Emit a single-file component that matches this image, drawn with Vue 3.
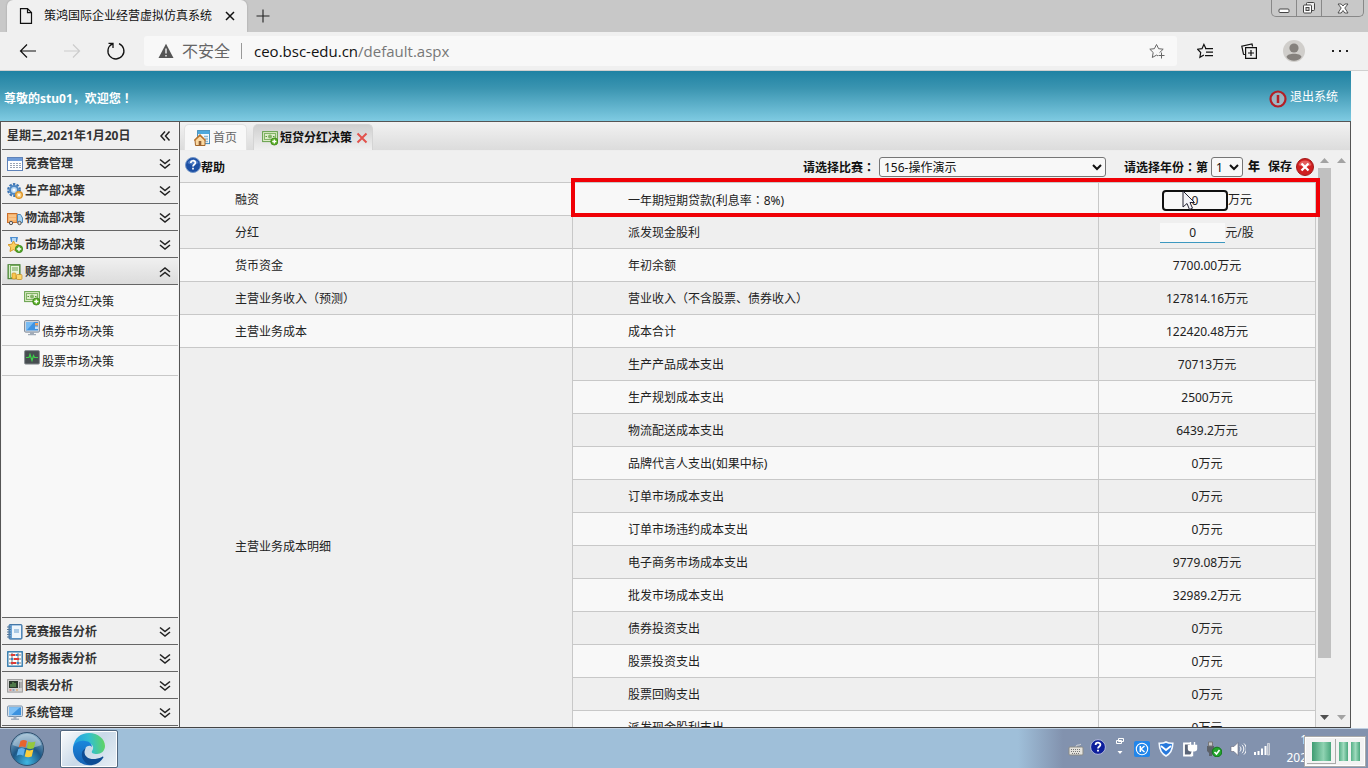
<script setup>
import { ref } from 'vue'

const icons = {
  table: '<rect x=".5" y="1.5" width="15" height="13" fill="#fff" stroke="#5f82b8"/><rect x="1" y="2" width="14" height="3" fill="#6f9bd8"/><path d="M3 7.5h2M6 7.5h2M9 7.5h2M12 7.5h2M3 9.500h2M6 9.500h2M9 9.500h2M12 9.500h2M3 11.500h2M6 11.500h2M9 11.500h2M12 11.500h2" stroke="#9aa4b4"/>',
  gear: '<circle cx="7" cy="7" r="5.800" fill="none" stroke="#3f76b4" stroke-width="2.200" stroke-dasharray="2.400 1.250"/><circle cx="7" cy="7" r="4" fill="#b9d8f2" stroke="#4f88c4" stroke-width="2"/><circle cx="7" cy="7" r="1.500" fill="#fff"/><circle cx="12" cy="12" r="3.300" fill="#fbd38a" stroke="#df982c" stroke-width="1.500"/><circle cx="12" cy="12" r="1.100" fill="#fff"/>',
  truck: '<rect x=".5" y="3.500" width="9.500" height="9" fill="#f6b26a" stroke="#c96f2c"/><path d="M2 6h7M2 9h7" stroke="#fbd5a5"/><path d="M10.500 4.500h3l2 3.500v4.500h-5z" fill="#a9d3f2" stroke="#4e88b8"/><circle cx="4" cy="13" r="1.700" fill="#ddd" stroke="#555"/><circle cx="12.500" cy="13" r="1.700" fill="#ddd" stroke="#555"/>',
  medal: '<path d="M3 0h8l-1 5H4z" fill="#4d8ed0"/><path d="M5 1h4v4H5z" fill="#b4d8f5"/><path d="M6.500 4l1.600 3.200 3.700.5-2.700 2.500.7 4.200-3.300-1.800L3 14.500l.7-4.300L1 7.700l3.800-.5z" fill="#fbcf62" stroke="#d59a2a"/><circle cx="12" cy="12" r="3.700" fill="#56a82a" stroke="#327d16" stroke-width=".7"/><path d="M12 9.800v4.400M9.800 12h4.400" stroke="#fff" stroke-width="1.400"/>',
  ledger: '<rect x="1" y=".7" width="12" height="14" fill="#81b967" stroke="#477e35"/><rect x="4" y="2" width="8" height="11" fill="#e8f4dc"/><path d="M5 4h6M5 6h6" stroke="#6fa052"/><path d="M2.500 1v13" stroke="#d8edcc"/><rect x="5" y="9" width="4" height="6" rx="1" fill="#f9c84e" stroke="#c58a22" stroke-width=".7"/><rect x="9.500" y="10.500" width="5.500" height="5" rx="1" fill="#fbd86e" stroke="#c58a22" stroke-width=".7"/>',
  money: '<rect x=".6" y="1.600" width="14.800" height="10" fill="#dcecc8" stroke="#65a04a"/><rect x="2.500" y="3.500" width="11" height="6" fill="none" stroke="#82b466"/><circle cx="8" cy="6.500" r="2" fill="#82b466"/><path d="M3.500 6.500h1.500M11 6.500h1.500" stroke="#5b943d"/><circle cx="12.300" cy="11.500" r="3.600" fill="#58ad22" stroke="#347c15" stroke-width=".7"/><path d="M12.300 9.400v4.200M10.200 11.500h4.200" stroke="#fff" stroke-width="1.400"/>',
  screen: '<rect x=".6" y=".6" width="14.800" height="11.500" rx="1" fill="#d8dde4" stroke="#7a8594"/><rect x="2" y="2" width="12" height="8.500" fill="#3e93e2"/><path d="M2 2h8L3 10H2z" fill="#78bbf3"/><rect x="11" y="3" width="3" height="2.500" fill="#f0a25b"/><rect x="11" y="6.500" width="3" height="2.500" fill="#c8dff5"/><path d="M6 12h4v2h2v1.300H4V14h2z" fill="#a1abb8"/>',
  pulse: '<rect x=".6" y=".6" width="14.800" height="13.500" rx="1" fill="#474d50" stroke="#8b9094"/><path d="M2 7.500h3l1-3 2 6 1.500-5 1 2H14" fill="none" stroke="#3fd24b" stroke-width="1.200"/>',
  notebook: '<rect x="2" y=".6" width="13" height="14.500" rx="1" fill="#6ba3d6" stroke="#3b6f9f"/><rect x="5" y="1.500" width="9" height="12.500" fill="#eef5fb"/><path d="M0 3h4M0 5.500h4M0 8h4M0 10.500h4M0 13h4" stroke="#55789a"/><path d="M7 5h5v4H7z" fill="#a8c8e4"/>',
  abacus: '<rect x=".8" y=".8" width="14.400" height="14.400" fill="#fff" stroke="#2d78ac" stroke-width="1.400"/><path d="M2 4h12M2 8h12M2 12h12M5 2v12M11 2v12" stroke="#777"/><path d="M4 3h4v2H4zM7 7h5v2H7zM4 11h5v2H4z" fill="#dd3b36"/><path d="M9 3h2v2H9zM4 7h2v2H4zM10 11h2v2h-2z" fill="#3c7fc4"/>',
  chart: '<rect x=".6" y="1.600" width="14.800" height="12.500" fill="#d5d5d5" stroke="#999"/><rect x="2" y="3" width="9" height="7" fill="#2c3a2e"/><path d="M4 9V6M6 9V4M8 9V5" stroke="#75b966"/><path d="M12.500 4v6M14 4v6" stroke="#888"/><path d="M2.500 12h2" stroke="#d44"/><path d="M5.500 12h2" stroke="#47a"/><path d="M9 12h2" stroke="#d94"/>',
  monitor: '<rect x=".6" y="1" width="14.800" height="10.500" rx="1" fill="#e2e8ef" stroke="#7890a8"/><rect x="2" y="2.300" width="12" height="8" fill="#3b92df"/><path d="M2 2.300h11l-9 8H2z" fill="#7fc0f5"/><path d="M6.500 11.500h3v2h2.500V15H4v-1.500h2.500z" fill="#a3b0bf"/>',
  home: '<rect x="3.600" y=".6" width="12" height="13" fill="#f3faff" stroke="#3c88b8"/><rect x="4" y="1" width="11.500" height="3" fill="#4ea8dc"/><path d="M10 6.500h4M11 9h3M11 11.500h3" stroke="#8db8d4" stroke-width="1.500"/><path d="M1 10l5-4.500 5 4.500v5.500H1.500z" fill="#fbd9a2" stroke="#a3662b"/><path d="M.3 10.500L6 5l5.500 5.500" fill="none" stroke="#b8722b" stroke-width="1.500"/><path d="M4.700 15v-4h2.600v4z" fill="#946136"/>',
  down: '<path d="M3 3.500l5 4 5-4M3 8l5 4 5-4" fill="none" stroke="#222" stroke-width="1.600"/>',
  up: '<path d="M3 8l5-4 5 4M3 12.500l5-4 5 4" fill="none" stroke="#222" stroke-width="1.600"/>',
  left: '<path d="M8 3.500L4 8l4 4.500M12.500 3.500l-4 4.500 4 4.500" fill="none" stroke="#222" stroke-width="1.500"/>'
}

const topMenu = [
  ['table', '竞赛管理'],
  ['gear', '生产部决策'],
  ['truck', '物流部决策'],
  ['medal', '市场部决策']
]
const subMenu = [
  ['money', '短贷分红决策'],
  ['screen', '债券市场决策'],
  ['pulse', '股票市场决策']
]
const bottomMenu = [
  ['notebook', '竞赛报告分析'],
  ['abacus', '财务报表分析'],
  ['chart', '图表分析'],
  ['monitor', '系统管理']
]
const summary = [
  ['货币资金', '年初余额', '7700.00万元'],
  ['主营业务收入（预测）', '营业收入（不含股票、债券收入）', '127814.16万元'],
  ['主营业务成本', '成本合计', '122420.48万元']
]
const details = [
  ['生产产品成本支出', '70713万元'],
  ['生产规划成本支出', '2500万元'],
  ['物流配送成本支出', '6439.2万元'],
  ['品牌代言人支出(如果中标)', '0万元'],
  ['订单市场成本支出', '0万元'],
  ['订单市场违约成本支出', '0万元'],
  ['电子商务市场成本支出', '9779.08万元'],
  ['批发市场成本支出', '32989.2万元'],
  ['债券投资支出', '0万元'],
  ['股票投资支出', '0万元'],
  ['股票回购支出', '0万元'],
  ['派发现金股利支出', '0万元']
]
const loan = ref('0')
const dividend = ref('0')
</script>

<template>
  <div class="desktop">
    <div class="tabstrip">
      <div class="browser-tab">
        <svg class="i16" viewBox="0 0 16 16"><path d="M2.500.6h7l4 4v10.800h-11zM9.500.6v4h4" fill="none" stroke="#111" stroke-width="1.200" /></svg>
        <span class="tab-title">策鸿国际企业经营虚拟仿真系统</span>
        <button class="bare" aria-label="关闭标签页"><svg class="i16" viewBox="0 0 16 16"><path d="M4 4l8 8M12 4l-8 8" stroke="#111" stroke-width="1.500" /></svg></button>
      </div>
      <button class="bare new-tab" aria-label="新建标签页"><svg class="i16" viewBox="0 0 16 16"><path d="M8 1.500v13M1.500 8h13" stroke="#222" stroke-width="1.100" /></svg></button>
      <div class="win-controls">
        <button class="bare" aria-label="最小化"><svg width="16" height="14" viewBox="0 0 16 14"><rect x="3" y="8" width="10" height="3.500" rx="1" fill="#fff" stroke="#444" /></svg></button>
        <button class="bare" aria-label="还原"><svg width="16" height="14" viewBox="0 0 16 14"><rect x="5.500" y="1.500" width="8" height="8" rx="1" fill="#eee" stroke="#444" /><rect x="2.500" y="4" width="8" height="8" rx="1" fill="#fff" stroke="#444" /><rect x="5" y="6.500" width="3" height="3" fill="#ccc" stroke="#444" /></svg></button>
        <button class="bare" aria-label="关闭"><svg width="16" height="14" viewBox="0 0 16 14"><path d="M3 3h3.200L8 5l1.800-2H13l-3.200 4L13 12H9.800L8 9.500 6.200 12H3l3.200-5z" fill="#fff" stroke="#444" stroke-width=".9" /></svg></button>
      </div>
    </div>

    <div class="navbar">
      <button class="bare" aria-label="后退"><svg class="i20" viewBox="0 0 20 20"><path d="M18 10H2.500M9 3.500L2.500 10 9 16.500" fill="none" stroke="#111" stroke-width="1.200" /></svg></button>
      <button class="bare" aria-label="前进"><svg class="i20" viewBox="0 0 20 20"><path d="M2 10h15.500M11 3.500l6.500 6.500-6.500 6.500" fill="none" stroke="#ccc" stroke-width="1.200" /></svg></button>
      <button class="bare" aria-label="刷新"><svg class="i20" viewBox="0 0 20 20"><path d="M13 2.600a8 8 0 1 1-6.600.2M7 7V2.300H2.500" fill="none" stroke="#111" stroke-width="1.300" /></svg></button>
      <div class="address">
        <svg class="i16" viewBox="0 0 16 16"><path d="M8 .8L15.500 15H.5z" fill="#555" /><path d="M8 5.500v5M8 12v1.600" stroke="#fff" stroke-width="1.300" /></svg>
        <span class="unsafe">不安全</span>
        <span class="sep"></span>
        <span class="url">ceo.bsc-edu.cn<i>/default.aspx</i></span>
        <button class="bare" aria-label="添加到收藏夹"><svg class="i16" viewBox="0 0 16 16"><path d="M10.500 9.700l3.700-3.500-4.600-.5L7.500 1.500 5.400 5.700l-4.600.5 3.400 3.300-.9 5 4.200-2.400 1.500.8M12.500 9.500v6M9.500 12.500h6" fill="none" stroke="#666" /></svg></button>
      </div>
      <div class="tools">
        <button class="bare" aria-label="收藏夹"><svg class="i16" viewBox="0 0 16 16"><path d="M9 5.700L6.900 1.500 5 5.700l-4.500.5 3.200 3.300-.8 4.800 4-2.400M8 5.700h8M9 9.200h7M8 12.700h8" fill="none" stroke="#111" stroke-width="1.200" /></svg></button>
        <button class="bare" aria-label="集锦"><svg class="i16" viewBox="0 0 16 16"><path d="M4 11.500l-1.500-.2L.8 3.200 11 1l.6 2.500" fill="none" stroke="#111" stroke-width="1.200" /><path d="M4.600 4.600h10.800v10.800H4.600zM10 7v6M7 10h6" fill="none" stroke="#111" stroke-width="1.200" /></svg></button>
        <button class="bare" aria-label="个人资料"><svg width="22" height="22" viewBox="0 0 22 22"><circle cx="11" cy="11" r="11" fill="#d0cecb" /><circle cx="11" cy="8" r="4.600" fill="#85817d" /><path d="M3.500 17c.5-4.500 14.500-4.500 15 0-3 5-12 5-15 0z" fill="#85817d" /></svg></button>
        <button class="bare" aria-label="设置及其他"><svg class="i16" viewBox="0 0 16 16"><path d="M0 7h2v2H0zM7 7h2v2H7zM14 7h2v2h-2z" fill="#222" /></svg></button>
      </div>
    </div>

    <div class="page">
      <div class="app">
        <header class="banner">
          <b>尊敬的stu01，欢迎您<span class="punct">！</span></b>
          <a href="#" class="logout">
            <svg width="18" height="18" viewBox="0 0 18 18"><circle cx="9" cy="9" r="7.500" fill="#e5c4c4" fill-opacity=".5" stroke="#b31f26" stroke-width="2.200" /><path d="M9 5v8" stroke="#b31f26" stroke-width="2.500" /></svg>
            <span>退出系统</span>
          </a>
        </header>
        <div class="body">
          <nav class="sidebar">
            <div class="menu-row date"><span>星期三,2021年1月20日</span><svg class="i16" viewBox="0 0 16 16" v-html="icons.left"></svg></div>
            <button v-for="m in topMenu" :key="m[1]" class="menu-row">
              <svg class="i16" viewBox="0 0 16 16" v-html="icons[m[0]]"></svg><span>{{ m[1] }}</span>
              <svg class="i16" viewBox="0 0 16 16" v-html="icons.down"></svg>
            </button>
            <button class="menu-row open">
              <svg class="i16" viewBox="0 0 16 16" v-html="icons.ledger"></svg><span>财务部决策</span>
              <svg class="i16" viewBox="0 0 16 16" v-html="icons.up"></svg>
            </button>
            <div class="sub-list">
              <a v-for="m in subMenu" :key="m[1]" href="#" class="sub-row">
                <svg class="i16" viewBox="0 0 16 16" v-html="icons[m[0]]"></svg><span>{{ m[1] }}</span>
              </a>
            </div>
            <button v-for="m in bottomMenu" :key="m[1]" class="menu-row">
              <svg class="i16" viewBox="0 0 16 16" v-html="icons[m[0]]"></svg><span>{{ m[1] }}</span>
              <svg class="i16" viewBox="0 0 16 16" v-html="icons.down"></svg>
            </button>
          </nav>

          <main class="main">
            <div class="tabs">
              <button class="tab"><svg class="i16" viewBox="0 0 16 16" v-html="icons.home"></svg><span>首页</span></button>
              <div class="tab active">
                <svg class="i16" viewBox="0 0 16 16" v-html="icons.money"></svg><b>短贷分红决策</b>
                <button class="bare" aria-label="关闭"><svg width="12" height="12" viewBox="0 0 12 12"><path d="M1.500 1.500l9 9M10.500 1.500l-9 9" stroke="#e2524c" stroke-width="2" /></svg></button>
              </div>
            </div>
            <div class="frame">
              <div class="content">
                <div class="toolbar">
                  <a href="#" class="help">
                    <svg class="i16" viewBox="0 0 16 16"><circle cx="8" cy="8" r="7.500" fill="#1c4fa3" stroke="#7397c9" /><path d="M2.500 6a6 6 0 0 1 11 0c-4 2-7 2-11 0z" fill="#6e9adb" opacity=".6" /><path d="M5.800 6c0-3 4.600-3 4.600-.2C10.400 7.500 8 7.500 8 9.500M8 10.800v1.800" fill="none" stroke="#fff" stroke-width="1.700" /></svg>
                    <b>帮助</b>
                  </a>
                  <div class="filters">
                    <label for="match">请选择比赛<span class="punct">：</span></label>
                    <select id="match" class="match"><option>156-操作演示</option></select>
                    <label for="year" class="year-label">请选择年份<span class="punct">：</span>第</label>
                    <select id="year" class="year"><option>1</option></select>
                    <b class="unit">年</b>
                    <button class="bare save">保存</button>
                    <button class="bare close" aria-label="关闭">
                      <svg width="18" height="18" viewBox="0 0 18 18"><circle cx="9" cy="9" r="8.500" fill="#cf1f20" stroke="#a31818" /><path d="M2.500 7a7 7 0 0 1 13 0c-4 2-9 2-13 0z" fill="#ee7b77" opacity=".7" /><path d="M5.500 5.500l7 7M12.500 5.500l-7 7" stroke="#fff" stroke-width="2.300" /></svg>
                    </button>
                  </div>
                </div>
                <table class="grid">
                  <colgroup><col class="c1"><col class="c2"><col class="c3"></colgroup>
                  <tbody>
                    <tr>
                      <td>融资</td>
                      <td><label for="loan">一年期短期贷款(利息率<span class="punct">：</span>8%)</label></td>
                      <td class="field-cell">
                        <span class="field"><input id="loan" v-model="loan" class="num focused">万元</span>
                        <svg class="pointer" width="13" height="22" viewBox="0 0 13 22"><path d="M1 1v16l4-3.500 2.500 6 3-1.300L8 12.500h4.500z" fill="#f4f4f8" stroke="#223" stroke-width="1" /></svg>
                      </td>
                    </tr>
                    <tr>
                      <td>分红</td>
                      <td><label for="dividend">派发现金股利</label></td>
                      <td class="field-cell"><span class="field"><input id="dividend" v-model="dividend" class="num">元/股</span></td>
                    </tr>
                    <tr v-for="r in summary" :key="r[0]"><td>{{ r[0] }}</td><td>{{ r[1] }}</td><td>{{ r[2] }}</td></tr>
                    <tr v-for="(r, i) in details" :key="r[0]">
                      <td v-if="i === 0" :rowspan="details.length">主营业务成本明细</td>
                      <td>{{ r[0] }}</td><td>{{ r[1] }}</td>
                    </tr>
                  </tbody>
                </table>
              </div>
              <div class="scroll inner">
                <svg width="9" height="5" viewBox="0 0 9 5"><path d="M0 5h9L4.500 0z" fill="#a3a3a3" /></svg>
                <div class="track"><div class="thumb"></div></div>
                <svg width="9" height="5" viewBox="0 0 9 5"><path d="M0 0h9L4.500 5z" fill="#505050" /></svg>
              </div>
              <div class="scroll">
                <svg width="9" height="5" viewBox="0 0 9 5"><path d="M0 5h9L4.500 0z" fill="#a3a3a3" /></svg>
                <div class="track"></div>
                <svg width="9" height="5" viewBox="0 0 9 5"><path d="M0 0h9L4.500 5z" fill="#a3a3a3" /></svg>
              </div>
              <div class="highlight"></div>
            </div>
          </main>
        </div>
      </div>
    </div>

    <footer class="taskbar">
      <button class="bare start" aria-label="开始">
        <svg width="36" height="36" viewBox="0 0 36 36">
          <defs><radialGradient id="orb" cx=".5" cy=".9" r=".9"><stop offset="0" stop-color="#3fb7e2" /><stop offset=".5" stop-color="#1d5786" /><stop offset="1" stop-color="#8fb3cb" /></radialGradient></defs>
          <circle cx="18" cy="18" r="16.500" fill="url(#orb)" stroke="#31506f" />
          <path d="M3.500 14a15 15 0 0 1 29 0c-9 4-20 4-29 0z" fill="#dce9f2" opacity=".45" />
          <path d="M11.500 10c2.500-1.500 4.500-1 6.500 0l-1.600 6.500c-2.200-1.200-4.300-1.200-6.700 0z" fill="#e8642d" />
          <path d="M19.300 10.500c2.500 1.200 5 1 7.200 0l-1.700 6.700c-2.400 1-4.800 1-7 0z" fill="#94c83e" />
          <path d="M9.300 18c2.500-1.300 4.600-1.200 6.700 0l-1.700 6.800c-2.200-1.300-4.400-1.200-6.700 0z" fill="#5fb0ea" />
          <path d="M17.400 18.600c2.300 1.200 4.700 1 7 0l-1.700 6.800c-2.300 1-4.800 1-7 0z" fill="#fbce3b" />
        </svg>
      </button>
      <button class="bare edge" aria-label="Microsoft Edge">
        <svg width="34" height="34" viewBox="0 0 34 34">
          <defs>
            <linearGradient id="eg1" x1="0" y1=".3" x2="1" y2=".2"><stop offset="0" stop-color="#229be4" /><stop offset=".5" stop-color="#32bfd0" /><stop offset="1" stop-color="#63d65a" /></linearGradient>
            <linearGradient id="eg2" x1="0" y1="0" x2="0" y2="1"><stop offset="0" stop-color="#1b87dc" /><stop offset="1" stop-color="#1561b4" /></linearGradient>
          </defs>
          <path d="M1 16C2 6 9 1 17 1c9 0 16 6 16 13 0 5-4 8-8 8-4 0-6-1-5-3 3-4 0-8-5-8C8 11 2 15 1 21z" fill="url(#eg1)" />
          <path d="M1 16c1-5 6-8 12-7 4 0 7 3 7 6-3-3-8 0-8 6 0 5 4 10 9 12C9 35 0 26 1 16z" fill="url(#eg2)" />
          <path d="M14 16c-5 7 3 15 16 9 1-1 2 0 1 1-3 5-8 7-11 7-7 0-11-7-10-12 0-2 2-4 4-5z" fill="#0d4c94" />
        </svg>
      </button>
      <div class="tray">
        <svg class="i16" viewBox="0 0 16 16"><path d="M8 6c0-3 3-1 5-3" fill="none" stroke="#ddd" /><rect x="1" y="6" width="14" height="8" rx="1" fill="#e4e2dc" stroke="#8b8b86" /><path d="M3 8.500h10M3 10.500h10M4 12.500h8" stroke="#777" stroke-dasharray="1 1" /></svg>
        <svg class="i16" viewBox="0 0 16 16"><circle cx="8" cy="8" r="7.400" fill="#0d1f9c" stroke="#b4bad8" /><path d="M5.600 6c0-3 4.800-3 4.800-.2C10.400 7.500 8 7.500 8 9.500M8 10.800v1.800" fill="none" stroke="#fff" stroke-width="1.800" /></svg>
        <svg width="10" height="20" viewBox="0 0 10 20"><path d="M3.500 1.500h5v3h-5zM1.500 3.500h5v3h-5z" fill="#8494ad" stroke="#fff" /><path d="M2.500 14h5L5 17z" fill="#fff" /></svg>
        <svg class="i16" viewBox="0 0 16 16"><rect width="16" height="16" rx="2" fill="#2186ea" /><circle cx="8" cy="8" r="5.700" fill="none" stroke="#fff" stroke-width="1.100" /><path d="M6.300 5v6M10.500 5L7 8l3.500 3" fill="none" stroke="#fff" stroke-width="1.500" /></svg>
        <svg class="i16" viewBox="0 0 16 16"><path d="M8 1c2 1.200 4.200 1.400 6.800 1.300C14.600 8.500 12.800 12.600 8 15 3.200 12.600 1.400 8.500 1.200 2.300 3.800 2.400 6 2.200 8 1z" fill="#2678dc" stroke="#f2f8ff" stroke-width="1.600" /><path d="M3 5l5 4 5-4" fill="none" stroke="#fff" stroke-width="1.800" /></svg>
        <svg class="i16" viewBox="0 0 16 16"><path d="M8 2.500H2v12h8" fill="#5b6578" stroke="#fff" stroke-width="1.800" /><path d="M8.500 1v3M12.500 1v3M6.500 4.500h8V8c0 2.500-8 2.500-8 0zM10.500 9v5.500H8" fill="#fff" stroke="#fff" stroke-width="1.400" /></svg>
        <svg class="i16" viewBox="0 0 16 16"><path d="M1 5h7v5l-2 2v3H3v-3l-2-2z" fill="#5c6168" /><path d="M2.500 1h4v4h-4z" fill="#c8c8c8" stroke="#777" /><circle cx="11" cy="11" r="4.800" fill="#22a52c" stroke="#13781b" /><path d="M8.500 11l2 2 3-4" fill="none" stroke="#fff" stroke-width="1.600" /></svg>
        <svg class="i16" viewBox="0 0 16 16"><path d="M1 5.500h3L8 1.500v13l-4-4H1z" fill="#fff" stroke="#667" stroke-width=".6" /><path d="M10 5.500c1.300 1.500 1.300 3.500 0 5M12 3.800c2.400 2.400 2.400 6 0 8.400M14 2.500c3 3 3 8 0 11" fill="none" stroke="#fff" /></svg>
        <svg class="i16" viewBox="0 0 16 16"><path d="M0 14v-3h2v3zM3.500 14v-4h2v4zM7 14V7.500h2V14zM10.500 14V5h2v9z" fill="#fff" /><path d="M13.500 14V2.500h2V14z" fill="#adb5c6" stroke="#eee" stroke-width=".6" /></svg>
        <div class="clock"><span>1</span><span>202</span></div>
      </div>
      <div class="recorder">
        <button class="bare rec-stop" aria-label="停止"><span class="block"></span></button>
        <button class="bare rec-pause" aria-label="暂停"><span class="bar"></span><span class="bar"></span></button>
      </div>
    </footer>
  </div>
</template>

<style>
html, body { margin: 0; height: 100%; overflow: hidden; }
</style>

<style scoped>
.desktop { height: 100vh; display: flex; flex-direction: column; font: 12px/18px "Noto Sans", "Noto Sans CJK SC", sans-serif; color: #222; background: #f8f8f8; overflow: hidden; }
.desktop *, .desktop *::before { box-sizing: border-box; }
.i16 { width: 16px; height: 16px; flex: none; }
.i20 { width: 20px; height: 20px; flex: none; }
svg { display: block; flex: none; }
button, select, input { font: inherit; color: inherit; }
a { color: inherit; text-decoration: none; }
.bare { background: none; border: 0; padding: 0; display: flex; align-items: center; justify-content: center; }
.punct { font-family: "Noto Sans CJK TC", sans-serif; }

.tabstrip { height: 32px; flex: none; background: #c8c8c8; display: flex; align-items: flex-start; padding-left: 7px; }
.browser-tab { width: 240px; height: 32px; background: #f0f0f0; border-radius: 6px 6px 0 0; display: flex; align-items: center; padding: 0 9px 0 11px; box-shadow: 0 0 2px #999; color: #111; }
.tab-title { margin-left: 10px; flex: 1; white-space: nowrap; }
.new-tab { margin-left: 8px; height: 32px; }
.win-controls { margin-left: auto; margin-right: 4px; display: flex; height: 17px; border: 1px solid #888; border-top: 0; border-radius: 0 0 5px 5px; }
.win-controls .bare { width: 25px; border-right: 1px solid #888; }
.win-controls .bare:last-child { width: 41px; border: 0; }

.navbar { height: 38px; flex: none; background: #f0f0f0; display: flex; align-items: center; gap: 24px; padding: 0 20px 0 18px; }
.address { flex: 1; height: 30px; background: #f8f8f8; border-radius: 3px; display: flex; align-items: center; padding: 0 12px 0 14px; margin-left: -6px; font-size: 16px; line-height: 24px; }
.unsafe { margin-left: 8px; color: #666; }
.sep { width: 1px; height: 16px; background: #999; margin: 0 12px 0 11px; }
.url { flex: 1; color: #111; font-family: "Open Sans", "Noto Sans", sans-serif; font-size: 15px; }
.url i { font-style: normal; color: #777; }
.tools { display: flex; align-items: center; gap: 28px; margin-left: -4px; }
.tools .bare:nth-child(3) { margin: 0 -1px 0 -2px; }

.page { flex: 1; min-height: 0; background: #f8f8f8; border-top: 1px solid #d0d0d0; }
.app { height: 100%; margin-right: 17px; display: flex; flex-direction: column; }
.banner { height: 51px; flex: none; background: linear-gradient(#1f82a3, #3b95b1 35%, #7fcbe2); border-bottom: 1px solid #555; color: #fff; display: flex; align-items: center; justify-content: space-between; padding: 4px 13px 0 4px; }
.logout { display: flex; align-items: flex-start; gap: 3px; }
.logout svg { margin-top: 2px; }
.body { flex: 1; min-height: 0; display: flex; border-bottom: 1px solid #444; }

.sidebar { width: 180px; flex: none; display: flex; flex-direction: column; border: solid #555; border-width: 0 1px; padding: 0 1px 1px; background: #f4f4f4; }
.menu-row { height: 27px; flex: none; background: #f0f0f0; border: 0; border-bottom: 1px solid #666; padding: 2px 5px 0; display: flex; align-items: center; text-align: left; font-weight: bold; color: #333; }
.menu-row span { flex: 1; margin-left: 2px; white-space: nowrap; }
.date { height: 28px; padding-top: 0; }
.date span { margin-left: 0; }
.open { background: linear-gradient(#f0f0f0, #dcdcdc); }
.sub-list { flex: 1; background: #f8f8f8; border-bottom: 1px solid #666; padding-top: 1px; }
.sub-row { height: 30px; display: flex; align-items: flex-start; border-bottom: 1px solid #c8c8c8; padding: 4px 0 0 22px; }
.sub-row span { margin: 3px 0 0 2px; }

.main { flex: 1; min-width: 0; display: flex; flex-direction: column; background: #f0f0f0; border-right: 1px solid #555; }
.tabs { height: 29px; flex: none; display: flex; gap: 6px; align-items: flex-end; padding-left: 4px; background: linear-gradient(#f2f2f2, #dcdcdc); border-bottom: 1px solid #eee; }
.tab { height: 26px; border: 1px solid #e2e2e2; border-bottom: 0; border-radius: 5px 5px 0 0; background: #f8f8f8; display: flex; align-items: center; gap: 3px; padding: 0 9px; color: #666; white-space: nowrap; }
.active { color: #111; background: linear-gradient(#cfcfcf, #f0f0f0); border-color: #d4d4d4; gap: 2px; padding: 0 4px 0 8px; }
.active b { margin-right: 2px; }
.frame { flex: 1; min-height: 0; display: flex; position: relative; }
.content { flex: 1; min-width: 0; overflow: hidden; }
.toolbar { height: 32px; display: flex; align-items: center; justify-content: space-between; border-bottom: 1px solid #c8c8c8; padding: 1px 2px 0 5px; color: #111; }
.help { display: flex; align-items: flex-start; }
.help b { margin-top: 2px; }
.filters { display: flex; align-items: center; font-weight: bold; }
select { height: 20px; border: 1px solid #767676; border-radius: 3px; background: #f8f8f8; font-weight: normal; padding: 0; }
.match { width: 227px; margin: 0 18px 0 4px; }
.year { width: 32px; margin: 0 5px 0 3px; }
.save { margin: 0 4px 0 8px; font-weight: bold; }
.grid { width: 100%; table-layout: fixed; border-spacing: 0; }
.c1 { width: 34.6%; }
.c2 { width: 46.3%; }
.c3 { width: 19.1%; }
.grid td { height: 33px; padding: 2px 0 0 55px; border: solid #c8c8c8; border-width: 0 1px 1px 0; white-space: nowrap; }
.grid tr:nth-child(odd) { background: #f8f8f8; }
.grid tr:nth-child(even) { background: #efefef; }
.grid td:last-child { padding: 2px 0 0; text-align: center; }
.field-cell { position: relative; }
.field { display: flex; justify-content: center; align-items: center; }
.num { width: 65px; height: 20px; border: 0; border-bottom: 1px solid #3c98c0; background: #f8f8f8; text-align: center; padding: 0; outline: 0; }
.focused { width: 66px; height: 21px; border: 2px solid #101010; border-radius: 4px; }
.pointer { position: absolute; left: calc(50% - 25px); top: 7px; }
.highlight { position: absolute; top: 27px; right: 30px; left: calc((100% - 34px) * 0.346 - 2px); height: 39px; border: 4px solid #f00006; pointer-events: none; }
.scroll { width: 17px; display: flex; flex-direction: column; align-items: center; padding: 7px 0; background: #f0f0f0; }
.track { flex: 1; width: 13px; margin: 5px 0 9px; }
.thumb { height: 91%; background: #c0c0c0; }

.taskbar { height: 40px; flex: none; position: relative; display: flex; align-items: center; border-top: 1px solid #bfd0e2; background: linear-gradient(90deg, #8292ae 0, #8292ae 60px, #9fbfd9 118px, #9fbfd9 calc(100% - 350px), #8292ae calc(100% - 305px)); }
.start { width: 54px; }
.edge { margin-left: 6px; width: 58px; height: 38px; background: linear-gradient(135deg, #fafcfd, #c9d9e8 50%, #e8f0f6); border: 1px solid #51677f; border-radius: 2px; box-shadow: inset 0 0 0 1px #fff; }
.tray { margin-left: auto; margin-right: 61px; display: flex; align-items: center; gap: 8px; height: 100%; }
.tray svg:nth-child(2) { margin: 0 0 4px -2px; }
.tray svg:nth-child(3) { margin: 0 1px 4px; }
.clock { display: flex; flex-direction: column; align-items: flex-end; color: #fff; margin-left: 8px; }
.recorder { position: absolute; right: 2px; bottom: 1px; width: 62px; height: 31px; display: flex; background: #f3f3f3; border: 1px solid #aaa; box-shadow: inset 0 0 0 1px #fff; padding: 2px; }
.rec-stop { width: 29px; border-right: 1px solid #aaa; border-bottom: 1px solid #aaa; }
.block { width: 19px; height: 19px; background: linear-gradient(90deg, #3f9c72, #8fd3b2 60%, #4ba87e); }
.rec-pause { flex: 1; gap: 3px; }
.bar { width: 9px; height: 19px; background: linear-gradient(90deg, #57b088, #9edabd 50%, #4ba87e); }
</style>
